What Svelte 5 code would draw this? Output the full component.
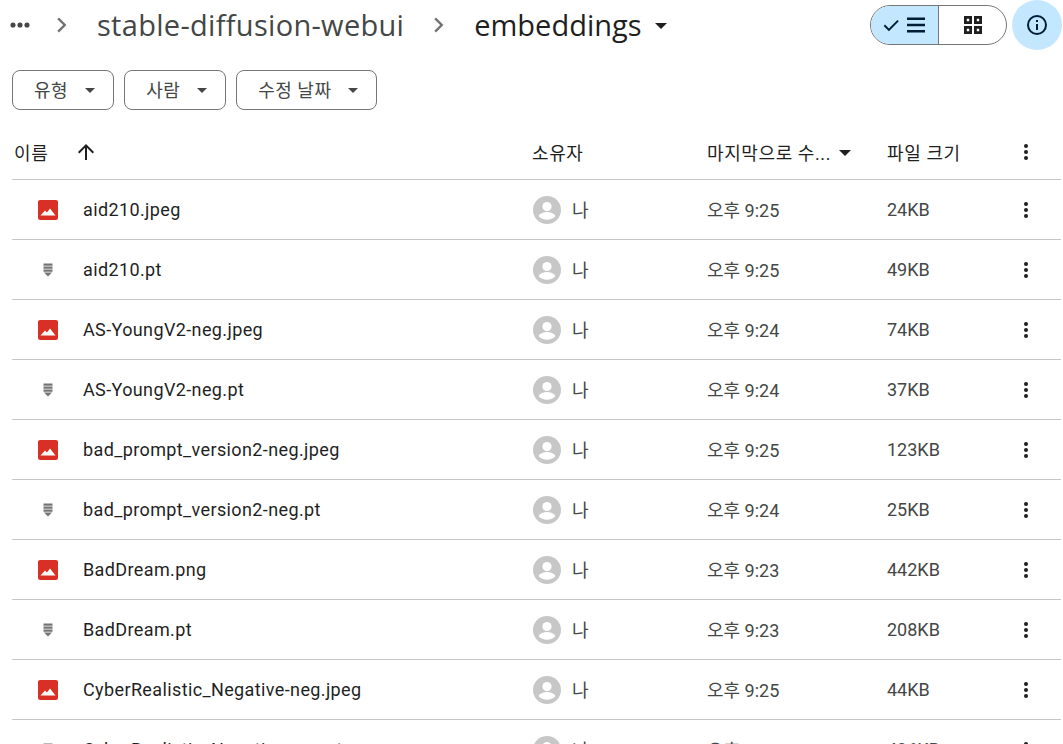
<script>
    const files = [
        { name: "aid210.jpeg", kind: "image", time: "오후 9:25", size: "24KB" },
        { name: "aid210.pt", kind: "file", time: "오후 9:25", size: "49KB" },
        { name: "AS-YoungV2-neg.jpeg", kind: "image", time: "오후 9:24", size: "74KB" },
        { name: "AS-YoungV2-neg.pt", kind: "file", time: "오후 9:24", size: "37KB" },
        { name: "bad_prompt_version2-neg.jpeg", kind: "image", time: "오후 9:25", size: "123KB" },
        { name: "bad_prompt_version2-neg.pt", kind: "file", time: "오후 9:24", size: "25KB" },
        { name: "BadDream.png", kind: "image", time: "오후 9:23", size: "442KB" },
        { name: "BadDream.pt", kind: "file", time: "오후 9:23", size: "208KB" },
        { name: "CyberRealistic_Negative-neg.jpeg", kind: "image", time: "오후 9:25", size: "44KB" },
        { name: "CyberRealistic_Negative-neg.pt", kind: "file", time: "오후 9:25", size: "496KB" },
    ];
    const filters = ["유형", "사람", "수정 날짜"];
</script>

<style>
    :global(body) {
        background: #fff;
        overflow: hidden;
    }

    .page {
        height: 744px;
        overflow: hidden;
        font-family: Roboto, "Noto Sans CJK KR", sans-serif;
        color: #1f1f1f;
    }

    .topbar {
        height: 50px;
        display: flex;
        align-items: center;
    }

    .crumbs {
        flex: 1;
        display: flex;
        align-items: center;
        padding-left: 6px;
    }

    .dots {
        width: 28px;
        height: 28px;
        margin-right: -7px;
    }

    .chev {
        width: 28px;
        height: 28px;
        margin: 0 21px;
        fill: #6f7173;
    }

    .crumb {
        font-size: 29px;
        line-height: 36px;
        color: #444746;
        font-family: "Open Sans", Roboto, sans-serif;
        font-weight: 400;
        letter-spacing: 0.3px;
    }

    .crumb.current {
        color: #1f1f1f;
        letter-spacing: 0;
    }

    .caret-big {
        width: 0;
        height: 0;
        border-left: 6px solid transparent;
        border-right: 6px solid transparent;
        border-top: 6px solid #1f1f1f;
        margin-left: 13px;
        margin-top: 2px;
    }

    .toggle {
        display: flex;
        width: 135px;
        height: 38px;
        border: 1px solid #747775;
        border-radius: 20px;
        overflow: hidden;
        margin-right: 5px;
    }

    .toggle .seg {
        display: flex;
        align-items: center;
        justify-content: center;
    }

    .seg.on {
        width: 67px;
        background: #c2e7ff;
        border-right: 1px solid #747775;
        gap: 3px;
    }

    .seg.off {
        flex: 1;
    }

    .info {
        width: 50px;
        height: 50px;
        border-radius: 50%;
        background: #c2e7ff;
        display: flex;
        align-items: center;
        justify-content: center;
        margin-right: 1px;
    }

    .filters {
        display: flex;
        gap: 10px;
        padding: 20px 0 0 12px;
    }

    .chip {
        height: 38px;
        border: 1px solid #747775;
        border-radius: 8px;
        display: flex;
        align-items: center;
        padding: 0 18px 0 21px;
        font-size: 18px;
        color: #444746;
        gap: 17px;
    }

    .chip-label {
        letter-spacing: 0.5px;
        margin-bottom: 3px;
    }

    .chip .caret {
        border-top-color: #444746;
    }

    .caret {
        width: 0;
        height: 0;
        border-left: 5px solid transparent;
        border-right: 5px solid transparent;
        border-top: 5px solid #1f1f1f;
    }

    .table {
        margin: 15px 2px 0 12px;
    }

    .row {
        height: 59px;
        display: grid;
        grid-template-columns: 71px 449px 175px 180px 1fr 47px;
        align-items: center;
        border-bottom: 1px solid #c7c7c7;
        font-size: 18px;
    }

    .head {
        height: 54px;
        letter-spacing: 0.6px;
    }

    .head-name {
        grid-column: span 2;
        display: flex;
        align-items: center;
        gap: 26px;
        padding-left: 2px;
    }

    .sorted {
        display: flex;
        align-items: center;
        gap: 8px;
    }

    .sorted .caret {
        border-left-width: 6.5px;
        border-right-width: 6.5px;
        border-top-width: 6.5px;
        margin-top: 2px;
    }

    .name {
        letter-spacing: 0.38px;
    }

    .icon-cell {
        display: flex;
        padding-left: 26px;
    }

    .owner {
        display: flex;
        align-items: center;
        gap: 11px;
        padding-left: 1px;
        color: #444746;
    }

    .owner-label {
        margin-bottom: 2px;
    }

    .avatar {
        width: 28px;
        height: 28px;
    }

    .muted {
        color: #444746;
    }

    .time {
        margin-bottom: 2px;
    }

    .menu-cell {
        display: flex;
    }

    .kebab {
        width: 24px;
        height: 24px;
        fill: #1f1f1f;
    }
</style>

<div class="page">
    <div class="topbar">
        <div class="crumbs">
            <svg class="dots" viewBox="0 0 24 24" fill="#444746"><circle cx="6" cy="12" r="2.2"/><circle cx="12" cy="12" r="2.2"/><circle cx="18" cy="12" r="2.2"/></svg>
            <svg class="chev" viewBox="0 0 24 24"><path d="M9.4 5.6 8 7l5 5-5 5 1.4 1.4 6.4-6.4z"/></svg>
            <span class="crumb">stable-diffusion-webui</span>
            <svg class="chev" viewBox="0 0 24 24"><path d="M9.4 5.6 8 7l5 5-5 5 1.4 1.4 6.4-6.4z"/></svg>
            <span class="crumb current">embeddings</span>
            <span class="caret-big"></span>
        </div>
        <div class="toggle">
            <div class="seg on">
                <svg width="20" height="20" viewBox="0 0 24 24" fill="#001d35"><path d="M9.5 16.2 4.8 11.5 3.2 13.1l6.3 6.3L21.3 7.6 19.7 6z"/></svg>
                <svg width="24" height="24" viewBox="0 0 24 24" fill="#001d35"><path d="M3 4.500h18v2.600H3zM3 10.700h18v2.600H3zM3 16.900h18v2.600H3z"/></svg>
            </div>
            <div class="seg off">
                <svg width="24" height="24" viewBox="0 0 24 24" fill="#1f1f1f"><path fill-rule="evenodd" d="M3 3h8v8H3zM5.800 5.800v2.400h2.400V5.800zM13 3h8v8h-8zM15.800 5.800v2.400h2.400V5.800zM3 13h8v8H3zM5.800 15.800v2.400h2.400v-2.400zM13 13h8v8h-8zM15.800 15.800v2.400h2.400v-2.400z"/></svg>
            </div>
        </div>
        <div class="info">
            <svg width="24" height="24" viewBox="0 0 24 24" fill="#001d35"><path d="M11 7h2v2h-2zM11 11h2v6h-2z"/><path fill-rule="evenodd" d="M12 2a10 10 0 1 0 0 20 10 10 0 0 0 0-20zm0 2a8 8 0 1 1 0 16 8 8 0 0 1 0-16z"/></svg>
        </div>
    </div>

    <div class="filters">
        {#each filters as f}
            <div class="chip"><span class="chip-label">{f}</span><span class="caret"></span></div>
        {/each}
    </div>

    <div class="table">
        <div class="row head">
            <div class="head-name">
                이름
                <svg width="24" height="24" viewBox="0 0 24 24" fill="#1f1f1f"><path d="M11 20V7.800l-5.600 5.600L4 12l8-8 8 8-1.400 1.400L13 7.800V20z"/></svg>
            </div>
            <div>소유자</div>
            <div class="sorted">마지막으로 수...<span class="caret"></span></div>
            <div>파일 크기</div>
            <div class="menu-cell">
                <svg class="kebab" viewBox="0 0 24 24"><circle cx="12" cy="6" r="2"/><circle cx="12" cy="12" r="2"/><circle cx="12" cy="18" r="2"/></svg>
            </div>
        </div>
        {#each files as file}
            <div class="row">
                <div class="icon-cell">
                    {#if file.kind === "image"}
                        <svg width="20" height="20" viewBox="0 0 20 20"><rect width="20" height="20" rx="2" fill="#d93025"/><path fill="#fff" d="M2.500 15.500 7 10.500l2 2 3-4 5.500 7z"/></svg>
                    {:else}
                        <svg width="20" height="20" viewBox="0 0 20 20" fill="#757575"><path d="M5.500 3.500h9v2.200h-9zM5.500 6.500h9v2.200h-9zM5.500 9.500h9v2.200h-9zM6 12.500h8l-4 4z"/></svg>
                    {/if}
                </div>
                <div class="name">{file.name}</div>
                <div class="owner">
                    <svg class="avatar" viewBox="0 0 28 28"><circle cx="14" cy="14" r="14" fill="#c7c7c7"/><circle cx="14" cy="10.500" r="4.600" fill="#fff"/><path fill="#fff" d="M5.500 20c1.600-2.800 5-4 8.500-4s6.900 1.200 8.500 4c-2 2.600-5.100 3.800-8.500 3.800S7.500 22.600 5.500 20z"/></svg>
                    <span class="owner-label">나</span>
                </div>
                <div class="muted time">{file.time}</div>
                <div class="muted">{file.size}</div>
                <div class="menu-cell">
                    <svg class="kebab" viewBox="0 0 24 24"><circle cx="12" cy="6" r="2"/><circle cx="12" cy="12" r="2"/><circle cx="12" cy="18" r="2"/></svg>
                </div>
            </div>
        {/each}
    </div>
</div>
